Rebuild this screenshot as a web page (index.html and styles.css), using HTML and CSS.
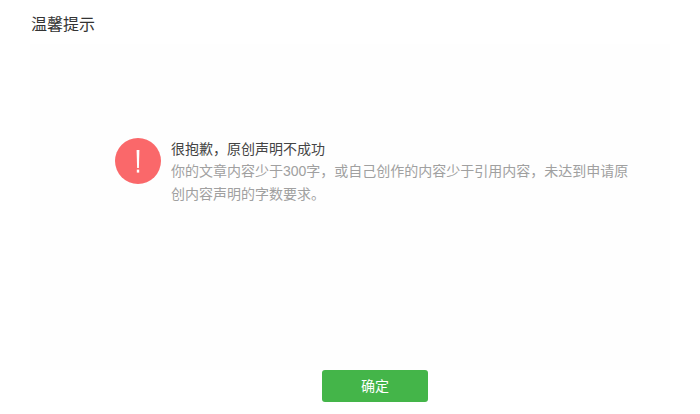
FILE: index.html
```html
<!DOCTYPE html>
<html lang="zh-CN">

<head>
  <meta charset="UTF-8" />
  <meta name="viewport" content="width=device-width, initial-scale=1.0" />
  <title>温馨提示</title>
  <link rel="stylesheet" href="styles.css">
</head>

<body>
  <div class="dialog" role="dialog" aria-labelledby="dialog-title">
    <h1 id="dialog-title" class="dialog-title">温馨提示</h1>
    <div class="dialog-body">
      <div class="message">
        <svg class="message-icon" viewBox="0 0 46 46" aria-hidden="true">
          <circle cx="23" cy="23" r="23" fill="#fa686a" />
          <path d="M21.6 12h2.8l-.5 18h-1.8z" fill="#fff" />
          <rect x="21.8" y="31.6" width="2.4" height="3" fill="#fff" />
        </svg>
        <div class="message-text">
          <p class="message-main">很抱歉，原创声明不成功</p>
          <p class="message-desc">你的文章内容少于300字，或自己创作的内容少于引用内容，未达到申请原创内容声明的字数要求。</p>
        </div>
      </div>
    </div>
    <div class="dialog-footer">
      <button type="button" class="btn-primary">确定</button>
    </div>
  </div>
</body>

</html>
```

FILE: styles.css
```css
/* Page */
body {
  margin: 0;
  background-color: #fff;
  font-family: "Liberation Sans", "Noto Sans CJK SC", sans-serif;
}

/* Dialog */
.dialog {
  display: flex;
  flex-direction: column;
  height: 414px;
  box-sizing: border-box;
}

.dialog-title {
  margin: 0;
  padding: 14px 32px 0 31px;
  font-size: 16px;
  font-weight: normal;
  line-height: 22px;
  color: #333;
}

.dialog-body {
  flex: 1;
  margin: 8px 30px 0;
  padding: 94px 30px 0 85px;
  background-color: #fefefe;
}

/* Message */
.message {
  display: flex;
  gap: 10px;
}

.message-icon {
  flex: none;
  width: 46px;
  height: 46px;
}

.message-text {
  width: 462px;
  font-size: 14px;
  line-height: 23px;
}

.message-main {
  margin: 0 0 -1px;
  color: #444;
}

.message-desc {
  margin: 0;
  color: #a0a0a0;
}

/* Footer */
.dialog-footer {
  display: flex;
  justify-content: center;
  padding: 0 0 12px 50px;
}

.btn-primary {
  width: 106px;
  height: 32px;
  padding: 0 0 3px;
  border: none;
  border-radius: 3px;
  background-color: #44b549;
  color: #fff;
  font-family: inherit;
  font-size: 14px;
  cursor: pointer;
}
```
